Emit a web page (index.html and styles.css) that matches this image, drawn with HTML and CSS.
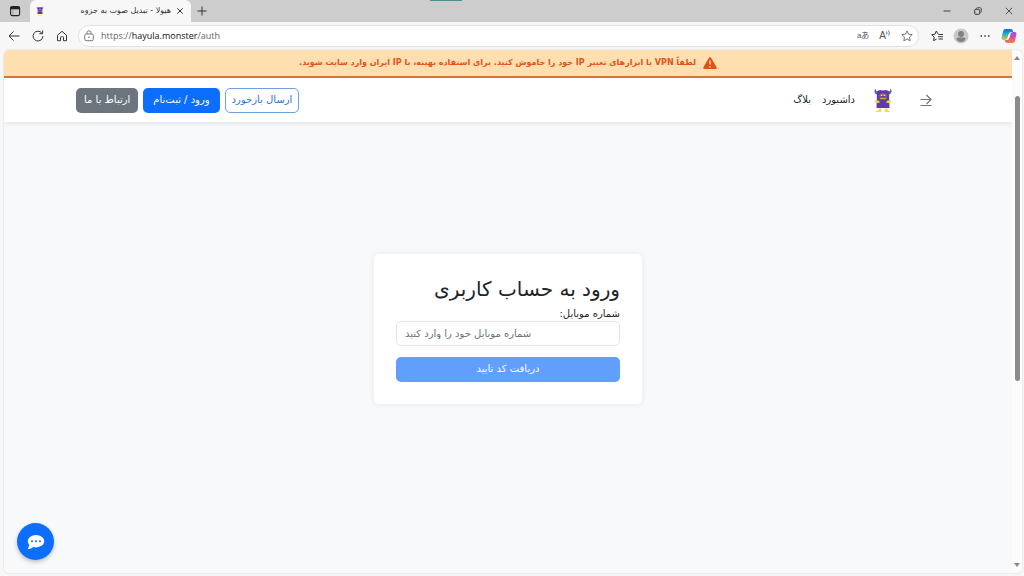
FILE: index.html
```html
<!DOCTYPE html>
<html lang="fa">
<head>
    <meta charset="UTF-8">
    <meta name="viewport" content="width=device-width, initial-scale=1.0">
    <title>هیولا - تبدیل صوت به جزوه</title>
    <link rel="stylesheet" href="styles.css">
</head>
<body>
    <svg width="0" height="0" class="defs" aria-hidden="true">
        <symbol id="monster" viewBox="0 0 18 26">
            <path d="M1.500 1.500C-.5 4 .5 7 3 7.500L5 5C3 5 1.700 4 1.500 1.500zM16.500 1.500c2 2.500 1 5.500-1.500 6L13 5c2 0 3.300-1 3.500-3.500z" fill="#4a66b0"/>
            <path d="M3 4.500Q5 2 9 3.500 13 2 15 4.500L15.500 21h-13z" fill="#5d3bab"/>
            <path d="M5.500 7.500q3.500-2 7 0v2q-3.500-1-7 0z" fill="#b5765f"/>
            <path d="M7 8h1v1H7zM10 8h1v1h-1z" fill="#f5e5d5"/>
            <path d="M5 10.800h8l-1.500 1.500h-5z" fill="#e0a23b"/>
            <path d="M1.500 13l3.500.7 1 1.800-3.500.8-1.500-1zM16.500 13l-3.500.7-1 1.800 3.500.8 1.500-1z" fill="#f5d536"/>
            <path d="M4.500 21.500h2.800v3.500H1.800q0-1.200 2.700-1.700zM10.700 21.500h2.800v1.800q2.700.5 2.700 1.700h-5.500z" fill="#f5dc3c"/>
        </symbol>
    </svg>
    <div class="browser">
        <div class="tabs">
            <button class="icon-btn workspace" aria-label="Tab actions">
                <svg width="12" height="12" viewBox="0 0 12 12"><rect x="1.6" y="1.6" width="9" height="9" rx="1.5" fill="none" stroke="#222" stroke-width="1.1"/><path d="M1.6 2h9v2.3h-9z" fill="#222"/><path d="M4 4v6" stroke="#888" stroke-width=".6"/></svg>
            </button>
            <div class="tab">
                <svg width="8" height="10"><use href="#monster"/></svg>
                <span class="tab-title" dir="rtl">هیولا - تبدیل صوت به جزوه</span>
                <button class="icon-btn" aria-label="Close tab"><svg width="8" height="8" viewBox="0 0 8 8"><path d="M1.3 1.3l5.4 5.4M6.7 1.3L1.3 6.7" stroke="#333"/></svg></button>
            </div>
            <button class="icon-btn new-tab" aria-label="New tab"><svg width="10" height="10" viewBox="0 0 10 10"><path d="M5 .5v9M.5 5h9" stroke="#333"/></svg></button>
            <div class="progress"></div>
            <div class="win">
                <button class="icon-btn" aria-label="Minimize"><svg width="8" height="8" viewBox="0 0 8 8"><path d="M.5 4h7" stroke="#444"/></svg></button>
                <button class="icon-btn" aria-label="Restore"><svg width="8" height="8" viewBox="0 0 8 8"><path d="M2.500 1.500Q2.500.7 3.300.7H6q1.300 0 1.300 1.300v2.700q0 .8-.8.8" fill="none" stroke="#555"/><rect x=".7" y="2.300" width="5" height="5" rx="1" fill="none" stroke="#333"/></svg></button>
                <button class="icon-btn" aria-label="Close"><svg width="8" height="8" viewBox="0 0 8 8"><path d="M.8.8l6.4 6.4M7.2.8L.8 7.2" stroke="#444" stroke-width=".9"/></svg></button>
            </div>
        </div>
        <div class="toolbar">
            <button class="icon-btn" aria-label="Back"><svg width="12" height="12" viewBox="0 0 12 12"><path d="M11.5 6H1M5.5 1.5L1 6l4.5 4.5" fill="none" stroke="#333"/></svg></button>
            <button class="icon-btn" aria-label="Refresh"><svg width="12" height="12" viewBox="0 0 12 12"><path d="M10.9 6A4.9 4.9 0 1 1 9.8 3M10.6.5v3.2H7.4" fill="none" stroke="#333"/></svg></button>
            <button class="icon-btn" aria-label="Home"><svg width="12" height="12" viewBox="0 0 12 12"><path d="M1.5 5.3L6 1.3l4.5 4v5.4h-3V7.5q0-.8-.8-.8H5.300q-.8 0-.8.8v3.200h-3z" fill="none" stroke="#333" stroke-linejoin="round"/></svg></button>
            <div class="address">
                <svg width="12" height="12" viewBox="0 0 12 12"><rect x="1.700" y="4" width="8.600" height="6.700" rx="1.500" fill="none" stroke="#777"/><path d="M4 4V2.800a2 2 0 0 1 4 0V4" fill="none" stroke="#777"/><circle cx="6" cy="7.300" r=".8" fill="#777"/></svg>
                <span class="url">https://<b>hayula.monster</b>/auth</span>
                <button class="icon-btn translate" aria-label="Translate">aあ</button>
                <button class="icon-btn read" aria-label="Read aloud">A<svg width="5" height="8" viewBox="0 0 5 8"><path d="M.5 1.500q1 1.500 0 3M2.500.5q2 2.500 0 5" fill="none" stroke="#555" stroke-width=".8"/></svg></button>
                <button class="icon-btn" aria-label="Favorite"><svg width="12" height="12" viewBox="0 0 12 12"><path d="M6 .9l1.500 3.300 3.700.4-2.700 2.500.7 3.700L6 9l-3.200 1.800.7-3.700L.8 4.600l3.700-.4z" fill="none" stroke="#555" stroke-width=".8" stroke-linejoin="round"/></svg></button>
            </div>
            <div class="tools">
                <button class="icon-btn" aria-label="Favorites"><svg width="12" height="12" viewBox="0 0 12 12"><path d="M7.300 4.300L5.300 1 4 4.200l-3.300.5 2.500 2.400-.6 3.600L5.600 9M7.500 4.500H12M7 6.700h5M7.500 9H12" fill="none" stroke="#333" stroke-linejoin="round"/></svg></button>
                <button class="icon-btn" aria-label="Profile"><svg width="16" height="16" viewBox="0 0 16 16"><circle cx="8" cy="8" r="7.500" fill="#cbc9c7"/><circle cx="8" cy="6" r="3" fill="#84807e"/><path d="M3.500 11q0-1.500 1.500-1.500h6q1.500 0 1.500 1.500-1 3-4.500 3t-4.500-3z" fill="#84807e"/></svg></button>
                <button class="icon-btn" aria-label="Settings"><svg width="12" height="12" viewBox="0 0 12 12"><path d="M1.500 5.300H3v1.500H1.500zM5.300 5.300h1.500v1.500H5.300zM9 5.300h1.500v1.500H9z" fill="#333"/></svg></button>
                <button class="icon-btn" aria-label="Copilot"><svg width="16" height="16" viewBox="0 0 16 16">
                    <defs>
                        <linearGradient id="cool" x1="0" y1="0" x2="0" y2="1"><stop offset="0" stop-color="#1765dc"/><stop offset=".5" stop-color="#28b5c8"/><stop offset="1" stop-color="#f2c12e"/></linearGradient>
                        <linearGradient id="warm" x1="0" y1="0" x2="0" y2="1"><stop offset="0" stop-color="#8b55e8"/><stop offset=".5" stop-color="#e04f9c"/><stop offset="1" stop-color="#f58135"/></linearGradient>
                    </defs>
                    <path d="M4 1h6q1.300 0 1.800 1.500L12.300 4H10q-1.500 0-2 1.500L6.500 10Q6 12 4 12H2.500Q0 12 .7 9L2 3.500Q2.500 1 4 1z" fill="url(#cool)"/>
                    <path d="M12 15H6q-1.300 0-1.800-1.500L3.700 12H6q1.500 0 2-1.500L9.500 6Q10 4 12 4h1.500q2.500 0 1.800 3L14 12.500q-.5 2.500-2 2.500z" fill="url(#warm)"/>
                    <path d="M7.700 6h1.700L8.200 10H6.600z" fill="#fff"/>
                </svg></button>
            </div>
        </div>

        <div class="window">
            <div class="page" dir="rtl">
                <div class="notice">
                    <svg width="14" height="12" viewBox="0 0 14 12"><path d="M6.100.6q.9-1.200 1.800 0l5.700 9.700q.6 1.500-.9 1.700H1.300q-1.500-.2-.9-1.700z" fill="#dc5416"/><path d="M7 3.600v4M7 8.900v1.500" stroke="#ffdfb0" stroke-width="1.400"/></svg>
                    <span>لطفاً VPN یا ابزارهای تغییر IP خود را خاموش کنید. برای استفاده بهینه، با IP ایران وارد سایت شوید.</span>
                </div>
                <header class="navbar">
                    <a class="back" href="#" aria-label="بازگشت"><svg width="12" height="12" viewBox="0 0 12 12"><path d="M.5 5.500h10.500M6.500 1L11 5.500 6.500 10M.5 11.500h11" fill="none" stroke="#6c757d" stroke-width="1.200"/></svg></a>
                    <a class="brand" href="#" aria-label="هیولا"><svg width="18" height="26"><use href="#monster"/></svg></a>
                    <nav class="links">
                        <a href="#">داشبورد</a>
                        <a href="#">بلاگ</a>
                    </nav>
                    <div class="actions">
                        <button class="btn btn-outline">ارسال بازخورد</button>
                        <button class="btn btn-primary">ورود / ثبت‌نام</button>
                        <button class="btn btn-secondary">ارتباط با ما</button>
                    </div>
                </header>
                <main class="main">
                    <form class="card">
                        <h1>ورود به حساب کاربری</h1>
                        <label for="mobile">شماره موبایل:</label>
                        <input id="mobile" type="tel" dir="ltr" placeholder="شماره موبایل خود را وارد کنید">
                        <button class="btn btn-primary submit" type="submit" disabled>دریافت کد تایید</button>
                    </form>
                </main>
                <button class="chat" aria-label="گفتگو">
                    <svg width="18" height="16" viewBox="0 0 18 16"><path d="M1.600 9.500Q3 11 1 14.200q-.4.800.4.800 3 0 5-2z" fill="#fff"/><ellipse cx="9" cy="7.200" rx="8.200" ry="6.200" fill="#fff"/><g fill="#0d6efd"><circle cx="5" cy="7.200" r="1"/><circle cx="9" cy="7.200" r="1"/><circle cx="13" cy="7.200" r="1"/></g></svg>
                </button>
            </div>
            <div class="scrollbar">
                <svg width="6" height="4" viewBox="0 0 6 4"><path d="M3 0l3 4H0z" fill="#888"/></svg>
                <div class="track"><div class="thumb"></div></div>
                <svg width="6" height="4" viewBox="0 0 6 4"><path d="M0 0h6L3 4z" fill="#888"/></svg>
            </div>
        </div>
    </div>
</body>
</html>
```
FILE: styles.css
```css
*{
    box-sizing: border-box;
    margin: 0;
    padding: 0;
}
body{
    font-family: "Liberation Sans", "DejaVu Sans", sans-serif;
    background: #f7f7f7;
    color: #212529;
}
a{
    color: inherit;
    text-decoration: none;
}
button{
    font: inherit;
    border: 0;
    cursor: pointer;
}
svg{
    display: block;
    flex: none;
}
.defs{
    position: absolute;
}
.browser{
    display: flex;
    flex-direction: column;
    height: 100vh;
}

/* browser bars */
.icon-btn{
    display: flex;
    align-items: center;
    justify-content: center;
    background: none;
    color: #555;
}
.tabs{
    position: relative;
    display: flex;
    height: 22px;
    background: #cdcdcd;
}
.workspace{
    width: 30px;
}
.tab{
    display: flex;
    align-items: center;
    width: 161px;
    padding: 0 7px 0 6px;
    background: #f7f7f7;
    border-radius: 6px 6px 0 0;
}
.tab-title{
    flex: 1;
    padding: 0 5px;
    font: 8px/16px "DejaVu Sans", sans-serif;
    color: #333;
    white-space: nowrap;
}
.new-tab{
    width: 22px;
}
.progress{
    position: absolute;
    left: 42%;
    top: 0;
    width: 32px;
    height: 1px;
    background: #4f8c8d;
}
.win{
    display: flex;
    gap: 23px;
    margin-left: auto;
    padding-right: 11px;
}
.toolbar{
    display: flex;
    align-items: center;
    gap: 12px;
    height: 28px;
    padding: 0 7px 0 8px;
}
.address{
    flex: 1;
    display: flex;
    align-items: center;
    gap: 10px;
    height: 22px;
    margin-left: -2px;
    padding: 0 5px 0 4px;
    background: #fff;
    border: 1px solid #e2e2e2;
    border-radius: 11px;
}
.url{
    flex: 1;
    margin-left: -4px;
    font: 9px/16px "Open Sans", sans-serif;
    color: #666;
}
.url b{
    font-weight: normal;
    color: #111;
}
.translate{
    font: 9px/12px "Liberation Sans", "Noto Sans CJK JP", sans-serif;
    font-size: 8px;
}
.read{
    align-items: flex-start;
    font-size: 10px;
    line-height: 12px;
}
.tools{
    display: flex;
    align-items: center;
    gap: 10px;
}

/* page */
.window{
    flex: 1;
    display: flex;
    min-height: 0;
    margin: 0 2px 3px 4px;
    border-radius: 5px;
    overflow: hidden;
    box-shadow: 0 0 2px #ccc;
}
.page{
    flex: 1;
    display: flex;
    flex-direction: column;
    background: #f8f9fa;
    font: 10px/16px "DejaVu Sans", sans-serif;
}
.notice{
    display: flex;
    align-items: center;
    justify-content: center;
    gap: 7px;
    height: 28px;
    background: #ffdfb0;
    border-bottom: 2px solid #d9713c;
    color: #dc5416;
    font-weight: bold;
    font-size: 8px;
}
.navbar{
    display: flex;
    align-items: center;
    height: 44px;
    padding: 0 72px;
    background: #fff;
    box-shadow: 0 2px 4px rgba(0,0,0,.08);
}
.back{
    padding: 0 8px;
}
.brand{
    margin: 0 20px 0 19px;
}
.links{
    display: flex;
    gap: 11px;
}
.actions{
    display: flex;
    gap: 5px;
    margin-right: auto;
}
.btn{
    height: 25px;
    padding: 0 8px;
    border-radius: 5px;
    color: #fff;
    white-space: nowrap;
}
.btn-primary{
    padding: 0 10px;
    background: #0d6efd;
}
.btn-secondary{
    background: #6c757d;
}
.btn-outline{
    padding: 0 6px;
    background: #fff;
    border: 1px solid #6da0dc;
    color: #2876d2;
}
.main{
    flex: 1;
    display: flex;
    align-items: center;
    justify-content: center;
    padding-bottom: 38px;
}
.card{
    display: flex;
    flex-direction: column;
    width: 268px;
    padding: 22px;
    background: #fff;
    border-radius: 5px;
    box-shadow: 0 0 6px rgba(0,0,0,.08);
}
.card h1{
    font-size: 20px;
    font-weight: normal;
    line-height: 26px;
    margin-bottom: 5px;
}
.card label{
    line-height: 14px;
}
.card input{
    height: 25px;
    padding: 0 8px;
    border: 1px solid #e3e6e9;
    border-radius: 5px;
    font: inherit;
    margin-bottom: 11px;
}
.card input::placeholder{
    color: #6c7278;
}
.submit:disabled{
    background: #629ffd;
}
.chat{
    position: fixed;
    left: 17px;
    bottom: 16px;
    display: flex;
    align-items: center;
    justify-content: center;
    width: 37px;
    height: 37px;
    border-radius: 50%;
    background: #0d6efd;
    box-shadow: 0 2px 4px rgba(0,0,0,.25);
}
.scrollbar{
    display: flex;
    flex-direction: column;
    align-items: center;
    justify-content: space-between;
    width: 10px;
    padding: 6px 0;
    background: #fcfcfc;
}
.track{
    flex: 1;
    width: 5px;
    padding-top: 36px;
}
.thumb{
    height: 61%;
    background: #8b8b8b;
    border-radius: 3px;
}
```
